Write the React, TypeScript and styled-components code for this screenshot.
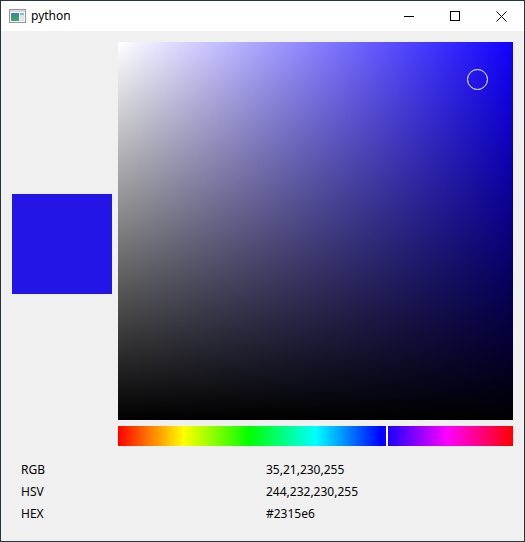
import React from "react";
import styled, { createGlobalStyle } from "styled-components";

const Global = createGlobalStyle`
  html, body { margin: 0; padding: 0; background: #f0f0f0; }
  * { box-sizing: border-box; }
`;

const Window = styled.div`
  width: 525px;
  height: 542px;
  border: 1px solid #26343c;
  display: flex;
  flex-direction: column;
  background: #f0f0f0;
  font-family: "Noto Sans", "Liberation Sans", sans-serif;
  font-size: 12px;
  color: #000;
`;

const TitleBar = styled.div`
  height: 30px;
  background: #ffffff;
  display: flex;
  align-items: center;
  flex-shrink: 0;
`;

const AppIcon = styled.svg`
  margin-left: 8px;
  width: 17px;
  height: 14px;
  flex-shrink: 0;
`;

const Title = styled.span`
  margin-left: 5px;
  flex: 1;
  font-size: 12px;
  margin-top: -1px;
`;

const CaptionButton = styled.div`
  width: 46px;
  height: 30px;
  display: flex;
  align-items: center;
  justify-content: center;
`;

const Content = styled.div`
  flex: 1;
  padding: 11px 11px 0 11px;
  display: flex;
  flex-direction: column;
`;

const TopRow = styled.div`
  display: flex;
  align-items: center;
  gap: 6px;
`;

const Preview = styled.div<{ $color: string }>`
  width: 100px;
  height: 100px;
  background: ${(p) => p.$color};
  flex-shrink: 0;
`;

const RightCol = styled.div`
  width: 395px;
  display: flex;
  flex-direction: column;
  gap: 6px;
`;

const SVArea = styled.div<{ $hue: string }>`
  position: relative;
  height: 378px;
  background:
    linear-gradient(to bottom, rgba(0, 0, 0, 0), #000),
    linear-gradient(to right, #fff, rgba(255, 255, 255, 0)),
    ${(p) => p.$hue};
`;

const Cursor = styled.div`
  position: absolute;
  width: 21px;
  height: 21px;
  margin-left: -10.5px;
  margin-top: -10.5px;
  border: 1px solid #fff;
  border-radius: 50%;
`;

const HueBar = styled.div`
  position: relative;
  height: 20px;
  background: linear-gradient(
    to right,
    #ff0000 0%,
    #ffff00 16.67%,
    #00ff00 33.33%,
    #00ffff 50%,
    #0000ff 66.67%,
    #ff00ff 83.33%,
    #ff0000 100%
  );
`;

const HueMarker = styled.div`
  position: absolute;
  top: 0;
  bottom: 0;
  width: 2px;
  background: #fff;
`;

const Info = styled.div`
  margin-top: 13px;
  padding-left: 9px;
  display: grid;
  grid-template-columns: 245px 1fr;
  grid-auto-rows: 22px;
  align-items: center;
`;

const Cell = styled.span`
  font-size: 12px;
  line-height: 22px;
`;

export default function App() {
  const h = 244, s = 232, v = 230;
  const hueColor = "hsl(244, 100%, 50%)";
  const rows: [string, string][] = [
    ["RGB", "35,21,230,255"],
    ["HSV", "244,232,230,255"],
    ["HEX", "#2315e6"],
  ];
  return (
    <>
      <Global />
      <Window>
        <TitleBar>
          <AppIcon viewBox="0 0 17 14">
            <rect x="0.5" y="0.5" width="16" height="13" fill="#f4f4f4" stroke="#9a9a9a" />
            <rect x="1" y="1" width="15" height="2" fill="#d8d8d8" />
            <defs>
              <linearGradient id="ig" x1="0" y1="0" x2="0" y2="1">
                <stop offset="0" stopColor="#3f7fb8" />
                <stop offset="0.6" stopColor="#3d9a7a" />
                <stop offset="1" stopColor="#5aa060" />
              </linearGradient>
            </defs>
            <rect x="2" y="4" width="8" height="8" fill="url(#ig)" />
            <rect x="11" y="4" width="4" height="8" fill="#dfe6ea" />
            <rect x="11" y="4" width="4" height="2" fill="#8fb8d8" />
          </AppIcon>
          <Title>python</Title>
          <CaptionButton>
            <svg width="10" height="10" viewBox="0 0 10 10">
              <line x1="0" y1="5.5" x2="10" y2="5.5" stroke="#000" strokeWidth="1" />
            </svg>
          </CaptionButton>
          <CaptionButton>
            <svg width="10" height="10" viewBox="0 0 10 10">
              <rect x="0.5" y="0.5" width="9" height="9" fill="none" stroke="#000" strokeWidth="1" />
            </svg>
          </CaptionButton>
          <CaptionButton>
            <svg width="11" height="11" viewBox="0 0 11 11">
              <path d="M0.5 0.5 L10.5 10.5 M10.5 0.5 L0.5 10.5" stroke="#000" strokeWidth="1" />
            </svg>
          </CaptionButton>
        </TitleBar>
        <Content>
          <TopRow>
            <Preview $color="#2315e6" />
            <RightCol>
              <SVArea $hue={hueColor}>
                <Cursor
                  style={{
                    left: `${(s / 255) * 100}%`,
                    top: `${(1 - v / 255) * 100}%`,
                  }}
                />
              </SVArea>
              <HueBar>
                <HueMarker style={{ left: `${(h / 360) * 100}%` }} />
              </HueBar>
            </RightCol>
          </TopRow>
          <Info>
            {rows.map(([k, val]) => (
              <React.Fragment key={k}>
                <Cell>{k}</Cell>
                <Cell>{val}</Cell>
              </React.Fragment>
            ))}
          </Info>
        </Content>
      </Window>
    </>
  );
}
